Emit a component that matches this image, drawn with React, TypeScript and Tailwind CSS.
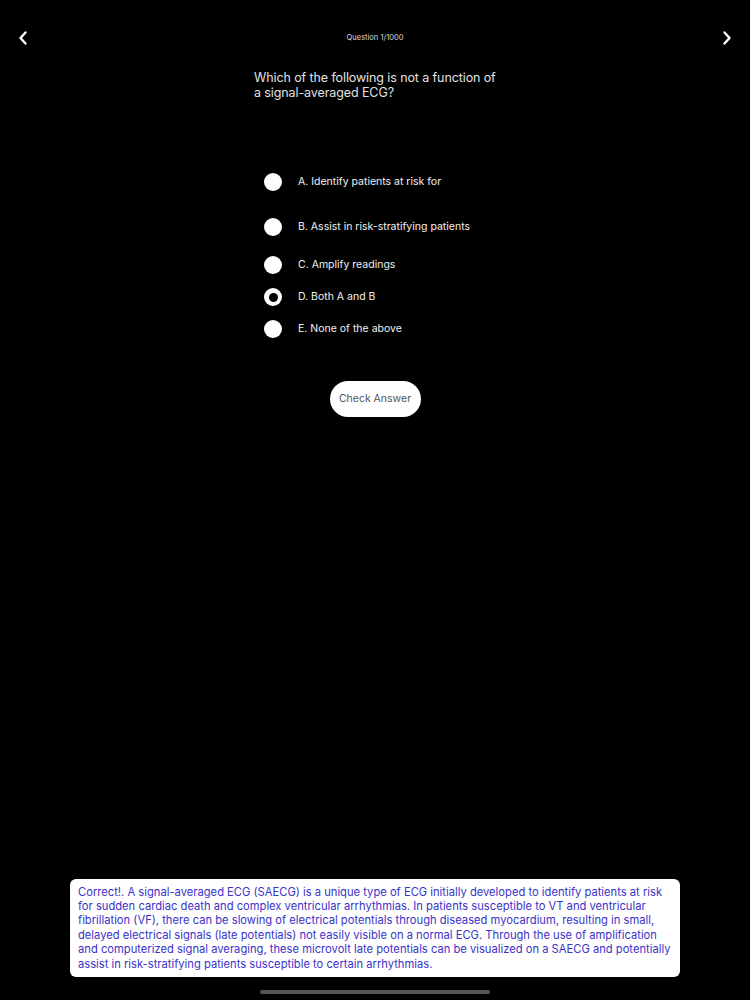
import { useState } from 'react';

const options = [
  { id: 'A', label: 'A. Identify patients at risk for', gap: 'mt-0' },
  { id: 'B', label: 'B. Assist in risk-stratifying patients', gap: 'mt-[27px]' },
  { id: 'C', label: 'C. Amplify readings', gap: 'mt-[20px]' },
  { id: 'D', label: 'D. Both A and B', gap: 'mt-[14px]' },
  { id: 'E', label: 'E. None of the above', gap: 'mt-[14px]' },
];

const Chevron = ({ dir }: { dir: 'left' | 'right' }) => (
  <svg width="12" height="16" viewBox="0 0 12 16" fill="none">
    <path
      d={dir === 'left' ? 'M8.5 2.5L3.5 8l5 5.5' : 'M3.5 2.5L8.5 8l-5 5.5'}
      stroke="white"
      strokeWidth="2.4"
      strokeLinecap="round"
      strokeLinejoin="round"
    />
  </svg>
);

const App = () => {
  const [selected, setSelected] = useState('D');

  return (
    <div className="flex h-[1000px] w-[750px] flex-col bg-black font-['Inter',sans-serif]">
      {/* header */}
      <div className="flex h-[20px] items-center justify-between px-[16px] mt-[28px]">
        <button className="flex w-[14px] justify-center">
          <Chevron dir="left" />
        </button>
        <span className="text-[7.5px] text-[#d8d8d8]">Question 1/1000</span>
        <button className="flex w-[14px] justify-center">
          <Chevron dir="right" />
        </button>
      </div>

      <div className="mx-auto w-[246px] pl-[2px]">
        <p className="mt-[22px] text-[12.5px] leading-[15px] tracking-[-0.1px] text-[#e2e2e2]">
          Which of the following is not a function of a signal-averaged ECG?
        </p>

        <div className="mt-[73px] flex flex-col pl-[10px]">
          {options.map(opt => (
            <button
              key={opt.id}
              onClick={() => setSelected(opt.id)}
              className={`flex h-[18px] items-center gap-[16px] text-left ${opt.gap}`}
            >
              {selected === opt.id ? (
                <span className="flex h-[18px] w-[18px] items-center justify-center rounded-full bg-white">
                  <span className="h-[9px] w-[9px] rounded-full bg-black" />
                </span>
              ) : (
                <span className="h-[18px] w-[18px] rounded-full bg-white" />
              )}
              <span className="text-[10.5px] text-[#f0f0f0]">{opt.label}</span>
            </button>
          ))}
        </div>
      </div>

      <div className="mt-[43px] flex justify-center">
        <button className="h-[36px] w-[91px] rounded-full bg-white text-[10.5px] text-[#555]">
          Check Answer
        </button>
      </div>

      <div className="mt-auto mx-[70px] rounded-[6px] bg-white pl-[8px] pr-[4px] pt-[6px] pb-[6px]">
        <p className="text-[11.2px] leading-[14.4px] text-[#3a33c9]">
          Correct!. A signal-averaged ECG (SAECG) is a unique type of ECG initially developed to identify patients at risk
          for sudden cardiac death and complex ventricular arrhythmias. In patients susceptible to VT and ventricular
          fibrillation (VF), there can be slowing of electrical potentials through diseased myocardium, resulting in small,
          delayed electrical signals (late potentials) not easily visible on a normal ECG. Through the use of amplification
          and computerized signal averaging, these microvolt late potentials can be visualized on a SAECG and potentially
          assist in risk-stratifying patients susceptible to certain arrhythmias.
        </p>
      </div>

      <div className="mt-[13px] mb-[6px] flex justify-center">
        <div className="h-[4px] w-[230px] rounded-full bg-[#555]" />
      </div>
    </div>
  );
};

export default App;
